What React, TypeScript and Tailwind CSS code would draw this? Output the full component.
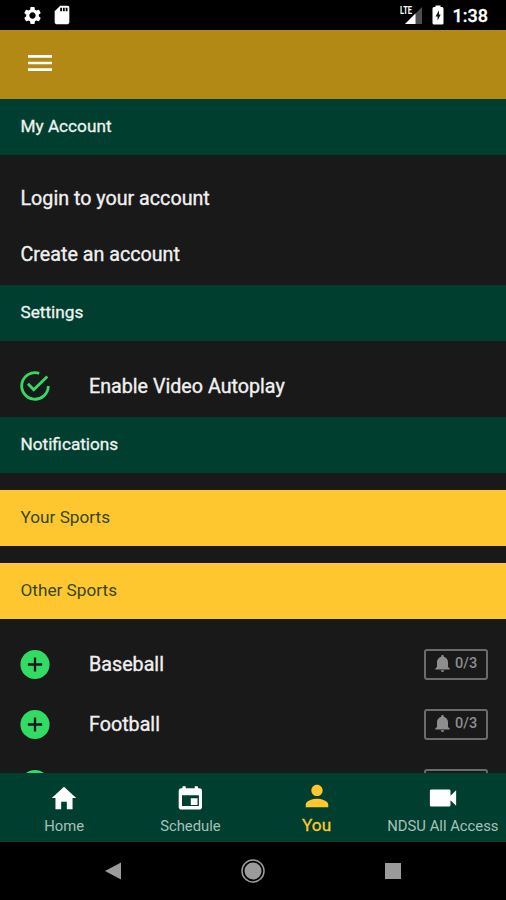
import React from 'react'
import { clsx } from 'clsx'
import { IoMdHome, IoMdMenu, IoMdNotifications, IoMdPerson, IoMdVideocam } from 'react-icons/io'
import { MdSdCard, MdSettings } from 'react-icons/md'

interface IconProps {
  className?: string
}

interface Tab {
  label: string
  icon: React.ComponentType<IconProps>
  active?: boolean
}

function CalendarIcon({ className }: IconProps) {
  return (
    <svg className={className} viewBox="0 0 30 30" fill="currentColor" fillRule="evenodd">
      <path d="M7.500 3.300h3.200V5.200h9V3.300h3.200V5.200H24.300Q27 5.200 27 8V23.700Q27 26.500 24.300 26.500H6.400Q3.700 26.500 3.700 23.700V8Q3.700 5.200 6.400 5.200H7.500zM7 12.200V22.900H23.900V12.200zM15.800 15.200h6.700v6.700h-6.700z" />
    </svg>
  )
}

function AddIcon({ className }: IconProps) {
  return (
    <svg className={className} viewBox="0 0 36 36">
      <circle cx="18" cy="17.500" r="14.600" fill="#32db64" />
      <path d="M18 10.400v14.200M10.900 17.500h14.200" stroke="#191919" strokeWidth="2.300" />
    </svg>
  )
}

function CheckIcon({ className }: IconProps) {
  return (
    <svg className={className} viewBox="0 0 36 36" fill="none" stroke="#32db64" strokeWidth="2.800">
      <path d="M22.200 5.300A13.300 13.300 0 1 0 31.300 18" />
      <path d="M11 15.800l5.700 5.900L30.300 8.600" />
    </svg>
  )
}

const tabs: Tab[] = [
  { label: 'Home', icon: IoMdHome },
  { label: 'Schedule', icon: CalendarIcon },
  { label: 'You', icon: IoMdPerson, active: true },
  { label: 'NDSU All Access', icon: IoMdVideocam },
]

const sports = ['Baseball', 'Football']

function StatusBar() {
  return (
    <div className="h-[30px] shrink-0 bg-black flex items-center justify-between pl-[22px] pr-[18px] text-white">
      <div className="flex items-center gap-[8px]">
        <MdSettings className="size-[21px]" />
        <MdSdCard className="size-[22px]" />
      </div>
      <div className="flex items-center">
        {/* LTE signal */}
        <svg className="w-[23px] h-[20px]" viewBox="0 0 23 20">
          <path d="M22 2v17H5z" fill="#4d4d4d" />
          <path d="M15.500 8.500V19H5z" fill="#fff" />
          <text x="0" y="9" fontSize="10" fontWeight="700" fill="#fff" fontFamily="Roboto, sans-serif" textLength="12" lengthAdjust="spacingAndGlyphs">LTE</text>
        </svg>
        {/* Battery */}
        <svg className="w-[12px] h-[20px] ml-[9px]" viewBox="0 0 12 20">
          <path d="M3.500 2V.5h5V2h1.500Q11.500 2 11.500 3.500V18Q11.500 19.500 10 19.500H2Q.5 19.500.5 18V3.500Q.5 2 2 2z" fill="#fff" />
          <path d="M7 5.500L3.500 11.500H5.600V15.500L8.700 9.500H7z" fill="#111" />
        </svg>
        <span className="ml-[9px] mt-[2px] text-[18px] leading-5 font-medium [-webkit-text-stroke:0.3px]">1:38</span>
      </div>
    </div>
  )
}

function SectionHeader({ title }: { title: string }) {
  return (
    <div className="h-14 shrink-0 flex items-center pl-[20.500px] text-[17.200px] bg-[#003f2f] text-[#eef3f0] [-webkit-text-stroke:0.3px]">
      {title}
    </div>
  )
}

function SportsHeader({ title }: { title: string }) {
  return (
    <div className="h-14 shrink-0 flex items-center pl-[20.500px] text-[17.200px] bg-[#ffc72f] text-[#35481b]">
      {title}
    </div>
  )
}

function SportRow({ name }: { name?: string }) {
  return (
    <div className="h-[60px] shrink-0 flex items-center pl-[17px] pr-[18px]">
      <AddIcon className="size-[36px]" />
      <span className="ml-9 flex-1 text-[19.700px] text-[#f0f0f0] [-webkit-text-stroke:0.35px]">{name}</span>
      <div className="w-16 h-[31px] mb-px flex items-center pl-[6px] gap-[2px] border-2 border-[#6b6b6b] rounded-[3px] text-[#8e8e8e]">
        {name && (
          <>
            <IoMdNotifications className="size-[21px] -mt-[2px]" />
            <span className="text-[14.500px] font-medium">0/3</span>
          </>
        )}
      </div>
    </div>
  )
}

export default function App() {
  return (
    <div className="w-[506px] h-[900px] flex flex-col overflow-hidden bg-[#191919] font-['Roboto',sans-serif]">
      <StatusBar />

      <div className="h-[69px] shrink-0 bg-[#b38915] flex items-center pl-6 pb-[3px]">
        <IoMdMenu className="size-8 text-white" />
      </div>

      <div className="flex-1 min-h-0 overflow-hidden flex flex-col">
        <SectionHeader title="My Account" />
        <div className="h-[129.500px] shrink-0 flex flex-col pt-[16px] pl-[20.500px] text-[19.700px] text-[#f0f0f0] [-webkit-text-stroke:0.35px]">
          <div className="h-14 flex items-center">Login to your account</div>
          <div className="h-14 flex items-center">Create an account</div>
        </div>

        <SectionHeader title="Settings" />
        <div className="h-[76.500px] shrink-0 flex items-center pt-[14px] pl-[17px] text-[19.700px] text-[#f0f0f0] [-webkit-text-stroke:0.35px]">
          <CheckIcon className="size-[36px]" />
          <span className="ml-9 pt-[2px]">Enable Video Autoplay</span>
        </div>

        <SectionHeader title="Notifications" />
        <div className="shrink-0 flex flex-col gap-[17px] pt-[16.500px] pb-4">
          <SportsHeader title="Your Sports" />
          <SportsHeader title="Other Sports" />
        </div>

        {sports.map(name => (
          <SportRow key={name} name={name} />
        ))}
        <SportRow />
      </div>

      {/* Bottom tabs */}
      <div className="h-[69px] shrink-0 grid grid-cols-4 bg-[#003f2f] pl-px">
        {tabs.map(({ label, icon: Icon, active }) => (
          <div
            key={label}
            className={clsx(
              'flex flex-col items-center whitespace-nowrap',
              active ? 'pt-[8px] text-[#ffc72f]' : 'pt-[10px] text-white'
            )}
          >
            <Icon className="size-[30px]" />
            <span
              className={clsx(
                active
                  ? 'text-[17.200px] leading-[29px] [-webkit-text-stroke:0.3px]'
                  : 'text-[14.800px] leading-[27px] text-[#a9c0b9]'
              )}
            >
              {label}
            </span>
          </div>
        ))}
      </div>

      {/* Android navigation */}
      <div className="h-[58px] shrink-0 bg-black grid grid-cols-[226px_54px_226px] items-center justify-items-center">
        <svg className="size-5" viewBox="0 0 20 20">
          <path d="M18 1.500v17L2 10z" fill="#9b9b9b" />
        </svg>
        <svg className="size-6" viewBox="0 0 24 24">
          <circle cx="12" cy="12" r="11" fill="none" stroke="#9b9b9b" strokeWidth="1.500" />
          <circle cx="12" cy="12" r="8.500" fill="#9b9b9b" />
        </svg>
        <div className="size-4 bg-[#9b9b9b]" />
      </div>
    </div>
  )
}
